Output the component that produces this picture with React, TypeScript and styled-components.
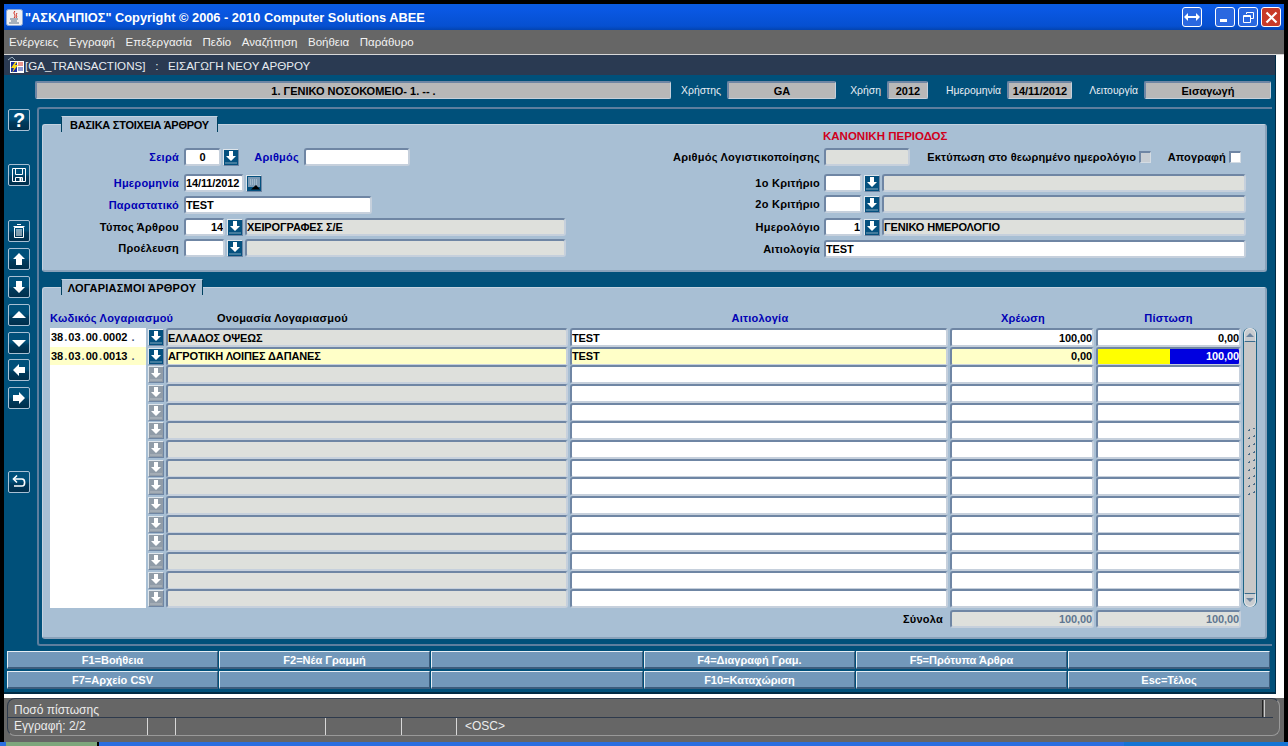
import React from 'react';
import styled, {createGlobalStyle} from 'styled-components';

const GlobalStyle = createGlobalStyle`
  html, body {
    margin: 0;
    padding: 0;
    background: #000;
    overflow: hidden;
  }
  * {
    box-sizing: border-box;
  }
`;

const font = `"Liberation Sans", Arial, sans-serif`;

const Screen = styled.div`
  width: 1288px;
  height: 746px;
  padding-top: 4px;
  background: #000;
  font-family: ${font};
  display: flex;
  flex-direction: column;
  overflow: hidden;
`;

const AppWindow = styled.div`
  margin-left: 4px;
  width: 1280px;
  height: 738px;
  display: flex;
  flex-direction: column;
`;

const TitleBar = styled.div`
  height: 26px;
  flex: none;
  background: linear-gradient(180deg, #0a5ce0 0%, #0a58e4 20%, #0650d0 85%, #0444b0 100%);
  display: flex;
  align-items: center;
  padding: 0 3px 0 2px;
`;

const TitleIcon = styled.svg`
  width: 17px;
  height: 17px;
  flex: none;
`;

const TitleText = styled.div`
  margin-left: 2px;
  color: #fff;
  font-size: 12.8px;
  font-weight: bold;
  white-space: nowrap;
  flex: 1;
`;

const WinButton = styled.div<{$close?: boolean; $mr?: number}>`
  width: 20px;
  height: 20px;
  border: 1px solid #fff;
  border-radius: 3px;
  margin-right: ${(p) => p.$mr ?? 3}px;
  background: ${(p) => (p.$close ? '#c83a28' : '#2a68e0')};
  display: flex;
  align-items: center;
  justify-content: center;
  &:last-child {
    margin-right: 0;
  }
`;

const MenuBar = styled.div`
  height: 25px;
  flex: none;
  background: #666;
  display: flex;
  align-items: center;
  padding-left: 5px;
  gap: 10.6px;
  color: #f2f2f2;
  font-size: 11.5px;
  border-bottom: 1px solid #d8d8d8;
`;

const Middle = styled.div`
  height: 643px;
  flex: none;
  display: flex;
  background: #fff;
  align-items: flex-start;
`;

const Inner = styled.div`
  width: 1272px;
  height: 639px;
  display: flex;
  flex-direction: column;
  background: #00507a;
  border-bottom: 2px solid #002a44;
  border-right: 1px solid #002a44;
`;

const NavBar = styled.div`
  height: 20px;
  flex: none;
  background: #2a3a52;
  color: #e8ecf0;
  font-size: 11.6px;
  display: flex;
  align-items: center;
  padding: 1px 0 0 3px;
  white-space: pre;
`;

const NavIcon = styled.svg`
  width: 18px;
  height: 17px;
  margin-right: 0;
  flex: none;
`;

const HeaderRow = styled.div`
  display: flex;
  align-items: center;
  margin: 6px 0 0 31px;
  height: 18px;
  flex: none;
`;

const HeaderField = styled.div<{$w: number}>`
  width: ${(p) => p.$w}px;
  height: 18px;
  flex: none;
  background: #b8b8b8;
  border-top: 2px solid #6f86a4;
  border-left: 2px solid #6f86a4;
  border-bottom: 1px solid #c6d0dc;
  border-right: 1px solid #c6d0dc;
  border-radius: 2px;
  color: #000;
  font-size: 11px;
  font-weight: bold;
  display: flex;
  align-items: center;
  justify-content: center;
  white-space: nowrap;
`;

const HeaderLabel = styled.div<{$w: number}>`
  width: ${(p) => p.$w}px;
  flex: none;
  color: #e8eef4;
  font-size: 10.4px;
  text-align: right;
  padding-right: 6px;
  white-space: nowrap;
`;

const Body = styled.div`
  display: flex;
  flex: none;
  margin-top: 8px;
`;

const ToolBar = styled.div`
  width: 33px;
  flex: none;
  padding-left: 4px;
  display: flex;
  flex-direction: column;
`;

const ToolButton = styled.div<{$mt: number}>`
  width: 22px;
  height: 22px;
  flex: none;
  margin-top: ${(p) => p.$mt}px;
  border: 1px solid #a8c0d4;
  border-radius: 2px;
  background: linear-gradient(180deg, #00507a 0%, #00507a 45%, #003a5c 60%, #002f4c 100%);
  color: #fff;
  display: flex;
  align-items: center;
  justify-content: center;
`;

const ToolGlyph = styled.svg`
  width: 16px;
  height: 16px;
`;

const QuestionMark = styled.span`
  font-size: 20px;
  font-weight: bold;
  line-height: 20px;
`;

const Frame = styled.div`
  width: 1235px;
  height: 539px;
  flex: none;
  border-top: 2px solid #5e7e9e;
  border-left: 2px solid #5e7e9e;
  border-bottom: 2px solid #5e7e9e;
  border-top-left-radius: 3px;
  border-bottom-left-radius: 3px;
  padding: 15px 0 0 3px;
  display: flex;
  flex-direction: column;
`;

const Panel = styled.div<{$h: number; $mt?: number}>`
  position: relative;
  width: 1225px;
  height: ${(p) => p.$h}px;
  flex: none;
  margin-top: ${(p) => p.$mt ?? 0}px;
  background: #a8bfd4;
  border-top: 1px solid #c4d2e0;
  border-left: 1px solid #c4d2e0;
  border-bottom: 2px solid #8aa2ba;
  border-right: 2px solid #8aa2ba;
  border-radius: 3px;
`;

const PanelTab = styled.div<{$w: number; $ls: number}>`
  position: absolute;
  left: 18px;
  top: -9px;
  width: ${(p) => p.$w}px;
  height: 16px;
  background: #a8bfd4;
  border-top: 1px solid #c4d2e0;
  border-left: 1px solid #00405f;
  border-right: 1px solid #00405f;
  color: #000;
  font-size: 11px;
  font-weight: bold;
  letter-spacing: ${(p) => p.$ls}px;
  display: flex;
  align-items: center;
  justify-content: center;
  white-space: nowrap;
`;

const FormColumns = styled.div`
  display: flex;
  height: 100%;
`;

const LeftColumn = styled.div`
  width: 597px;
  flex: none;
  padding-top: 23px;
`;

const RightColumn = styled.div`
  flex: 1;
  padding-top: 2px;
`;

const FormRow = styled.div<{$mt?: number}>`
  display: flex;
  align-items: center;
  height: 18px;
  margin-top: ${(p) => p.$mt ?? 0}px;
`;

const Label = styled.div<{$w: number; $blue?: boolean; $gap?: number}>`
  width: ${(p) => p.$w}px;
  flex: none;
  text-align: right;
  padding-right: ${(p) => p.$gap ?? 5}px;
  color: ${(p) => (p.$blue ? '#0000b4' : '#000')};
  font-size: 11px;
  font-weight: bold;
  letter-spacing: 0.25px;
  white-space: nowrap;
`;

const Field = styled.div<{$w?: number; $gray?: boolean; $right?: boolean; $center?: boolean}>`
  width: ${(p) => (p.$w ? `${p.$w}px` : 'auto')};
  flex: ${(p) => (p.$w ? 'none' : 1)};
  height: 18px;
  background: ${(p) => (p.$gray ? '#dee0dc' : '#fff')};
  border-top: 2px solid #6f86a4;
  border-left: 2px solid #6f86a4;
  border-bottom: 2px solid #c6d0dc;
  border-right: 2px solid #c6d0dc;
  border-radius: 3px;
  color: #000;
  font-size: 11px;
  font-weight: bold;
  letter-spacing: -0.12px;
  display: flex;
  align-items: center;
  justify-content: ${(p) => (p.$right ? 'flex-end' : p.$center ? 'center' : 'flex-start')};
  padding: 0;
  white-space: nowrap;
  overflow: hidden;
`;

const LovButton = styled.div<{$off?: boolean; $ml?: number; $mr?: number}>`
  width: 16px;
  height: 17px;
  flex: none;
  margin-left: ${(p) => p.$ml ?? 2}px;
  margin-right: ${(p) => p.$mr ?? 2}px;
  background: ${(p) => (p.$off ? '#909ca8' : '#04507e')};
  border-top: 1px solid #dfe6ec;
  border-left: 1px solid #dfe6ec;
  border-bottom: 1px solid #6f86a4;
  border-right: 1px solid #6f86a4;
  display: flex;
  align-items: center;
  justify-content: center;
`;

const LovGlyph = styled.svg`
  width: 12px;
  height: 13px;
`;

const PeriodTitle = styled.div`
  height: 18px;
  margin-bottom: 3px;
  padding-left: 183px;
  color: #d0001c;
  font-size: 11.5px;
  font-weight: bold;
  display: flex;
  align-items: center;
  white-space: nowrap;
`;

const CheckLabel = styled.div<{$w: number}>`
  width: ${(p) => p.$w}px;
  flex: none;
  text-align: right;
  padding-right: 3px;
  font-size: 11px;
  font-weight: bold;
  letter-spacing: 0.15px;
  color: #000;
  white-space: nowrap;
`;

const CheckBox = styled.div<{$gray?: boolean}>`
  width: 12px;
  height: 12px;
  flex: none;
  background: ${(p) => (p.$gray ? '#c8ced4' : '#fff')};
  border-top: 2px solid #6f86a4;
  border-left: 2px solid #6f86a4;
  border-bottom: 1px solid #d4dce4;
  border-right: 1px solid #d4dce4;
`;

const TableHead = styled.div`
  display: grid;
  grid-template-columns: 116px 404px 380px 146px 145px;
  height: 14px;
  margin: 23px 0 3px 7px;
  align-items: center;
`;

const HeadCell = styled.div<{$blue?: boolean; $pl?: number; $center?: boolean}>`
  color: ${(p) => (p.$blue ? '#0000b4' : '#000')};
  font-size: 11px;
  font-weight: bold;
  letter-spacing: 0.25px;
  padding-left: ${(p) => p.$pl ?? 0}px;
  text-align: ${(p) => (p.$center ? 'center' : 'left')};
  white-space: nowrap;
`;

const TableBody = styled.div`
  display: flex;
  margin-left: 7px;
  height: 280px;
`;

const Rows = styled.div`
  width: 1191px;
  flex: none;
  display: grid;
  grid-template-columns: 98px 18px 404px 380px 146px 145px;
  grid-template-rows: repeat(15, 18.667px);
`;

const CodeCell = styled.div<{$active?: boolean}>`
  background: ${(p) => (p.$active ? '#ffffc8' : '#fff')};
  margin-right: 2px;
  font-size: 11px;
  font-weight: bold;
  color: #000;
  display: flex;
  align-items: center;
  padding-left: 1px;
  white-space: pre;
`;

const CodeDot = styled.span<{$last?: boolean}>`
  color: #44587a;
  margin: 0 ${(p) => (p.$last ? 0 : 1)}px 0 ${(p) => (p.$last ? 4 : 1)}px;
`;

const RowLov = styled(LovButton)`
  margin: 1px 0 0 0;
`;

const RowField = styled(Field)<{$active?: boolean}>`
  height: 19px;
  margin-right: 2px;
  background: ${(p) => (p.$active ? '#ffffc8' : p.$gray ? '#dee0dc' : '#fff')};
`;

const CreditField = styled(Field)`
  height: 19px;
`;

const CreditActive = styled(Field)`
  height: 19px;
  padding: 0;
  background: #ffffc8;
  align-items: stretch;
`;

const CreditYellow = styled.div`
  width: 72px;
  flex: none;
  background: #ffff00;
`;

const CreditBlue = styled.div`
  flex: 1;
  background: #0000e0;
  color: #fff;
  display: flex;
  align-items: center;
  justify-content: flex-end;
`;

const ScrollBar = styled.div`
  position: relative;
  width: 14px;
  height: 279px;
  margin-left: 2px;
  flex: none;
  background: #c8c8c8;
  border-left: 1px solid #1d6486;
  border-right: 1px solid #1d6486;
  border-radius: 6px 6px 6px 6px;
  display: flex;
  flex-direction: column;
  justify-content: space-between;
`;

const ScrollEnd = styled.div<{$top?: boolean}>`
  height: 14px;
  background: #c8ccd0;
  border: 1px solid #e0e4e8;
  border-${(p) => (p.$top ? 'bottom' : 'top')}: 1px solid #3c6c8c;
  border-radius: ${(p) => (p.$top ? '6px 6px 0 0' : '0 0 6px 6px')};
  display: flex;
  align-items: center;
  justify-content: center;
`;

const ScrollArrow = styled.div<{$up?: boolean}>`
  width: 0;
  height: 0;
  border-left: 4px solid transparent;
  border-right: 4px solid transparent;
  border-${(p) => (p.$up ? 'bottom' : 'top')}: 4px solid #6a84a0;
`;

const ScrollGrip = styled.svg`
  position: absolute;
  left: 3px;
  top: 100px;
  width: 10px;
  height: 70px;
`;

const TotalsRow = styled.div`
  display: grid;
  grid-template-columns: 116px 404px 380px 146px 145px;
  margin: 2px 0 0 7px;
  height: 18px;
`;

const TotalLabel = styled.div`
  grid-column: 1 / 4;
  text-align: right;
  padding-right: 7px;
  font-size: 11px;
  font-weight: bold;
  letter-spacing: 0.25px;
  color: #000;
  line-height: 18px;
`;

const TotalField = styled(Field)`
  margin-right: 2px;
  color: #5f7690;
`;

const TotalLast = styled(Field)`
  color: #5f7690;
`;

const FunctionKeys = styled.div`
  display: grid;
  grid-template-columns: 212px 212px 213px 212px 212px 203px;
  grid-auto-rows: 18px;
  row-gap: 2px;
  margin: 5px 0 0 3px;
`;

const FunctionKey = styled.div`
  margin-right: 1px;
  background: #7298ba;
  border-top: 1px solid #e6eef4;
  border-left: 1px solid #e6eef4;
  border-bottom: 2px solid #3c5c7c;
  border-right: 1px solid #3c5c7c;
  color: #fff;
  font-size: 11px;
  font-weight: bold;
  display: flex;
  align-items: center;
  justify-content: center;
  white-space: nowrap;
`;

const StatusBar = styled.div`
  height: 44px;
  flex: none;
  background: #666;
  padding: 0 4px 6px 3px;
  display: flex;
`;

const StatusInner = styled.div`
  flex: 1;
  border: 1px solid #2e3a4c;
  border-bottom-color: #999;
  border-right-color: #999;
  border-radius: 8px;
  color: #ececec;
  font-size: 12px;
  display: flex;
  flex-direction: column;
`;

const StatusTop = styled.div`
  height: 19px;
  padding-left: 6px;
  border-bottom: 1px solid #2e3a4c;
  margin-right: 6px;
  display: flex;
  align-items: flex-end;
  justify-content: space-between;
`;

const StatusEnd = styled.div`
  width: 3px;
  height: 17px;
  margin-right: 8px;
  border-left: 1px solid #222;
  border-right: 1px solid #ccc;
`;

const StatusBottom = styled.div`
  display: flex;
  flex: 1;
  align-items: center;
`;

const StatusCell = styled.div<{$w: number; $pl?: number}>`
  width: ${(p) => p.$w}px;
  height: 17px;
  flex: none;
  padding-left: ${(p) => p.$pl ?? 6}px;
  border-right: 1px solid #d8d8d8;
  white-space: nowrap;
  line-height: 17px;
  &:last-child {
    border-right: none;
  }
`;

const Taskbar = styled.div`
  height: 4px;
  flex: none;
  display: flex;
  background: #2a6ee0;
`;

const StartButton = styled.div`
  width: 91px;
  margin-left: 6px;
  background: #7da67c;
`;

const TaskGap = styled.div`
  width: 2px;
  background: #000;
`;

const TaskMiddle = styled.div`
  width: 1025px;
`;

const TaskTray = styled.div`
  flex: 1;
  background: #1474d4;
`;

const arrowPaths: Record<string, string> = {
  up: 'M8 2 L14 8 L11 8 L11 14 L5 14 L5 8 L2 8 Z',
  down: 'M5 2 L11 2 L11 8 L14 8 L8 14 L2 8 L5 8 Z',
  left: 'M2 8 L8 2 L8 5 L14 5 L14 11 L8 11 L8 14 Z',
  right: 'M2 5 L8 5 L8 2 L14 8 L8 14 L8 11 L2 11 Z',
  triUp: 'M8 4 L15 11 L1 11 Z',
  triDown: 'M1 5 L15 5 L8 12 Z',
};

const ArrowIcon = ({dir}: {dir: string}) => (
  <ToolGlyph viewBox="0 0 16 16">
    <path d={arrowPaths[dir]} fill="#fff"/>
  </ToolGlyph>
);

const SaveIcon = () => (
  <ToolGlyph viewBox="0 0 16 16" fill="none" stroke="#fff">
    <path d="M1.5 1.5 H14.5 V14.5 H1.5 Z"/>
    <path d="M4.5 1.5 V7.5 H11.5 V1.5"/>
    <path d="M4.5 14.5 V10.5 H11.5 V14.5"/>
    <path d="M8.5 11 H10.5 V14 H8.5 Z" fill="#fff" stroke="none"/>
  </ToolGlyph>
);

const TrashIcon = () => (
  <ToolGlyph viewBox="0 0 16 16" fill="none" stroke="#fff">
    <path d="M6 1.5 H10 M2.5 3.5 H13.5"/>
    <path d="M3.5 4.5 H12.5 V14.5 H3.5 Z"/>
    <path d="M6 6 V13 M8 6 V13 M10 6 V13"/>
  </ToolGlyph>
);

const UndoIcon = () => (
  <ToolGlyph viewBox="0 0 16 16" fill="none" stroke="#fff" strokeWidth="1.6">
    <path d="M3 5 H11 C14.5 5 14.5 12 11 12 H3"/>
    <path d="M6 1.5 L2.5 5 L6 8.5"/>
  </ToolGlyph>
);

const LovIcon = ({off}: {off?: boolean}) => (
  <LovGlyph viewBox="0 0 12 13">
    <path d="M4 0 H8 V5 H11 L6 10 L1 5 H4 Z" fill="#fff"/>
    <path d="M0.5 12 H11.5" stroke={off ? '#e0e0e0' : '#fff'} strokeDasharray="1 1"/>
  </LovGlyph>
);

const CalendarIcon = () => (
  <LovGlyph viewBox="0 0 12 13">
    <rect x="0" y="0" width="12" height="10" fill="#7c9ab4"/>
    <path d="M2 3 H10 M2 5 H10 M2 7 H10" stroke="#c4d4e0" strokeDasharray="1 1"/>
    <path d="M3 12.5 L8 8 L12 12.5 Z" fill="#000"/>
  </LovGlyph>
);

const JavaIcon = () => (
  <TitleIcon viewBox="0 0 17 17">
    <rect x="0.5" y="0.5" width="16" height="16" rx="2" fill="#f0f0f0" stroke="#8aa8d8"/>
    <path d="M9 2 C6 5 11 6 8 9 M11 4 C9 6 12 7 10 9" stroke="#d02818" fill="none"/>
    <path d="M4 10 H12 M5 12 H11 M3 14 H13" stroke="#5a7088"/>
  </TitleIcon>
);

const FormsIcon = () => (
  <NavIcon viewBox="0 0 18 17">
    <path d="M1 3 L5 0 L8 3" stroke="#9cb0c0" fill="none"/>
    <rect x="3" y="4" width="14" height="12" fill="#fff"/>
    <rect x="4" y="5" width="6" height="10" fill="#1a2ea0"/>
    <path d="M8 5 L4 11 H7 L5 16 L11 8 H8 L10 5 Z" fill="#f8d818"/>
    <path d="M11 6 H16 M11 8 H16" stroke="#d02818"/>
    <path d="M11 11 H16 M11 13 H16" stroke="#1a2ea0"/>
  </NavIcon>
);

const GripIcon = () => (
  <ScrollGrip viewBox="0 0 10 70">
    {Array.from({length: 9}).map((_, i) => (
      <g key={i} fill="#4a6c88">
        <rect x="1" y={i * 8 + 2} width="2" height="1"/>
        <rect x="2" y={i * 8 + 1} width="1" height="1"/>
        <rect x="6" y={i * 8} width="2" height="1"/>
        <rect x="7" y={i * 8 - 1} width="1" height="1"/>
      </g>
    ))}
  </ScrollGrip>
);

const rows = [
  {code: ['38', '03', '00', '0002'], name: 'ΕΛΛΑΔΟΣ ΟΨΕΩΣ', note: 'TEST', debit: '100,00', credit: '0,00'},
  {code: ['38', '03', '00', '0013'], name: 'ΑΓΡΟΤΙΚΗ ΛΟΙΠΕΣ ΔΑΠΑΝΕΣ', note: 'TEST', debit: '0,00', credit: '100,00', active: true},
  ...Array.from({length: 13}).map(() => ({code: null, name: '', note: '', debit: '', credit: '', active: false})),
];

const keys = [
  'F1=Βοήθεια', 'F2=Νέα Γραμμή', '', 'F4=Διαγραφή Γραμ.', 'F5=Πρότυπα Άρθρα', '',
  'F7=Αρχείο CSV', '', '', 'F10=Καταχώριση', '', 'Esc=Τέλος',
];

const App = () => {
  return (
    <Screen>
      <GlobalStyle/>
      <AppWindow>
        <TitleBar>
          <JavaIcon/>
          <TitleText>"ΑΣΚΛΗΠΙΟΣ" Copyright © 2006 - 2010 Computer Solutions ABEE</TitleText>
          <WinButton $mr={13}>
            <svg width="16" height="10" viewBox="0 0 16 10"><path d="M0 5 L4 1 V4 H12 V1 L16 5 L12 9 V6 H4 V9 Z" fill="#fff"/></svg>
          </WinButton>
          <WinButton>
            <svg width="12" height="12" viewBox="0 0 12 12"><rect x="1" y="8" width="7" height="3" fill="#fff"/></svg>
          </WinButton>
          <WinButton>
            <svg width="13" height="13" viewBox="0 0 13 13" fill="none" stroke="#fff"><path d="M4.5 3 V1.5 H11.5 V7.5 H9"/><path d="M1.5 4.5 H8.5 V11.5 H1.5 Z M1.5 5.5 H8.5"/></svg>
          </WinButton>
          <WinButton $close>
            <svg width="13" height="13" viewBox="0 0 13 13"><path d="M1.5 1.5 L11.5 11.5 M11.5 1.5 L1.5 11.5" stroke="#fff" strokeWidth="2.2"/></svg>
          </WinButton>
        </TitleBar>
        <MenuBar>
          <span>Ενέργειες</span>
          <span>Εγγραφή</span>
          <span>Επεξεργασία</span>
          <span>Πεδίο</span>
          <span>Αναζήτηση</span>
          <span>Βοήθεια</span>
          <span>Παράθυρο</span>
        </MenuBar>
        <Middle>
          <Inner>
            <NavBar>
              <FormsIcon/>
              {'[GA_TRANSACTIONS]   :   ΕΙΣΑΓΩΓΗ ΝΕΟΥ ΑΡΘΡΟΥ'}
            </NavBar>
            <HeaderRow>
              <HeaderField $w={636}>1. ΓΕΝΙΚΟ ΝΟΣΟΚΟΜΕΙΟ- 1. -- .</HeaderField>
              <HeaderLabel $w={56}>Χρήστης</HeaderLabel>
              <HeaderField $w={109}>GA</HeaderField>
              <HeaderLabel $w={51}>Χρήση</HeaderLabel>
              <HeaderField $w={41}>2012</HeaderField>
              <HeaderLabel $w={79}>Ημερομηνία</HeaderLabel>
              <HeaderField $w={65}>14/11/2012</HeaderField>
              <HeaderLabel $w={72}>Λειτουργία</HeaderLabel>
              <HeaderField $w={127}>Εισαγωγή</HeaderField>
            </HeaderRow>
            <Body>
              <ToolBar>
                <ToolButton $mt={2}><QuestionMark>?</QuestionMark></ToolButton>
                <ToolButton $mt={33}><SaveIcon/></ToolButton>
                <ToolButton $mt={34}><TrashIcon/></ToolButton>
                <ToolButton $mt={6}><ArrowIcon dir="up"/></ToolButton>
                <ToolButton $mt={6}><ArrowIcon dir="down"/></ToolButton>
                <ToolButton $mt={6}><ArrowIcon dir="triUp"/></ToolButton>
                <ToolButton $mt={6}><ArrowIcon dir="triDown"/></ToolButton>
                <ToolButton $mt={5}><ArrowIcon dir="left"/></ToolButton>
                <ToolButton $mt={6}><ArrowIcon dir="right"/></ToolButton>
                <ToolButton $mt={62}><UndoIcon/></ToolButton>
              </ToolBar>
              <Frame>
                <Panel $h={148}>
                  <PanelTab $w={157} $ls={-0.25}>ΒΑΣΙΚΑ ΣΤΟΙΧΕΙΑ ΆΡΘΡΟΥ</PanelTab>
                  <FormColumns>
                    <LeftColumn>
                      <FormRow>
                        <Label $w={141} $blue>Σειρά</Label>
                        <Field $w={37} $center>0</Field>
                        <LovButton><LovIcon/></LovButton>
                        <Label $w={63} $blue>Αριθμός</Label>
                        <Field $w={106}/>
                      </FormRow>
                      <FormRow $mt={8}>
                        <Label $w={141} $blue>Ημερομηνία</Label>
                        <Field $w={60}>14/11/2012</Field>
                        <LovButton $ml={2}><CalendarIcon/></LovButton>
                      </FormRow>
                      <FormRow $mt={4}>
                        <Label $w={141} $blue>Παραστατικό</Label>
                        <Field $w={188}>TEST</Field>
                      </FormRow>
                      <FormRow $mt={4}>
                        <Label $w={141}>Τύπος Άρθρου</Label>
                        <Field $w={41} $right>14</Field>
                        <LovButton><LovIcon/></LovButton>
                        <Field $w={321} $gray>ΧΕΙΡΟΓΡΑΦΕΣ Σ/Ε</Field>
                      </FormRow>
                      <FormRow $mt={3}>
                        <Label $w={141}>Προέλευση</Label>
                        <Field $w={41}/>
                        <LovButton><LovIcon/></LovButton>
                        <Field $w={321} $gray/>
                      </FormRow>
                    </LeftColumn>
                    <RightColumn>
                      <PeriodTitle>ΚΑΝΟΝΙΚΗ ΠΕΡΙΟΔΟΣ</PeriodTitle>
                      <FormRow>
                        <Label $w={184} $gap={4}>Αριθμός Λογιστικοποίησης</Label>
                        <Field $w={86} $gray/>
                        <CheckLabel $w={229}>Εκτύπωση στο θεωρημένο ημερολόγιο</CheckLabel>
                        <CheckBox $gray/>
                        <CheckLabel $w={78}>Απογραφή</CheckLabel>
                        <CheckBox/>
                      </FormRow>
                      <FormRow $mt={8}>
                        <Label $w={184} $gap={4}>1ο Κριτήριο</Label>
                        <Field $w={38}/>
                        <LovButton><LovIcon/></LovButton>
                        <Field $w={364} $gray/>
                      </FormRow>
                      <FormRow $mt={3}>
                        <Label $w={184} $gap={4}>2ο Κριτήριο</Label>
                        <Field $w={38}/>
                        <LovButton><LovIcon/></LovButton>
                        <Field $w={364} $gray/>
                      </FormRow>
                      <FormRow $mt={5}>
                        <Label $w={184} $gap={4}>Ημερολόγιο</Label>
                        <Field $w={38} $right>1</Field>
                        <LovButton><LovIcon/></LovButton>
                        <Field $w={364} $gray>ΓΕΝΙΚΟ ΗΜΕΡΟΛΟΓΙΟ</Field>
                      </FormRow>
                      <FormRow $mt={4}>
                        <Label $w={184} $gap={4}>Αιτιολογία</Label>
                        <Field $w={422}>TEST</Field>
                      </FormRow>
                    </RightColumn>
                  </FormColumns>
                </Panel>
                <Panel $h={352} $mt={15}>
                  <PanelTab $w={142} $ls={0.25}>ΛΟΓΑΡΙΑΣΜΟΙ ΆΡΘΡΟΥ</PanelTab>
                  <TableHead>
                    <HeadCell $blue>Κωδικός Λογαριασμού</HeadCell>
                    <HeadCell $pl={51}>Ονομασία Λογαριασμού</HeadCell>
                    <HeadCell $blue $center>Αιτιολογία</HeadCell>
                    <HeadCell $blue $center>Χρέωση</HeadCell>
                    <HeadCell $blue $center>Πίστωση</HeadCell>
                  </TableHead>
                  <TableBody>
                    <Rows>
                      {rows.map((row, i) => (
                        <React.Fragment key={i}>
                          <CodeCell $active={row.active}>
                            {row.code && row.code.map((part, j) => (
                              <React.Fragment key={part}>
                                {part}<CodeDot $last={j === 3}>.</CodeDot>
                              </React.Fragment>
                            ))}
                          </CodeCell>
                          <RowLov $off={!row.code}><LovIcon off={!row.code}/></RowLov>
                          <RowField $gray $active={row.active}>{row.name}</RowField>
                          <RowField $active={row.active}>{row.note}</RowField>
                          <RowField $right $active={row.active}>{row.debit}</RowField>
                          {row.active ? (
                            <CreditActive>
                              <CreditYellow/>
                              <CreditBlue>{row.credit}</CreditBlue>
                            </CreditActive>
                          ) : (
                            <CreditField $right>{row.credit}</CreditField>
                          )}
                        </React.Fragment>
                      ))}
                    </Rows>
                    <ScrollBar>
                      <ScrollEnd $top><ScrollArrow $up/></ScrollEnd>
                      <GripIcon/>
                      <ScrollEnd><ScrollArrow/></ScrollEnd>
                    </ScrollBar>
                  </TableBody>
                  <TotalsRow>
                    <TotalLabel>Σύνολα</TotalLabel>
                    <TotalField $gray $right>100,00</TotalField>
                    <TotalLast $gray $right>100,00</TotalLast>
                  </TotalsRow>
                </Panel>
              </Frame>
            </Body>
            <FunctionKeys>
              {keys.map((key, i) => (
                <FunctionKey key={i}>{key}</FunctionKey>
              ))}
            </FunctionKeys>
          </Inner>
        </Middle>
        <StatusBar>
          <StatusInner>
            <StatusTop>
              <span>Ποσό πίστωσης</span>
              <StatusEnd/>
            </StatusTop>
            <StatusBottom>
              <StatusCell $w={140}>Εγγραφή: 2/2</StatusCell>
              <StatusCell $w={28}/>
              <StatusCell $w={150}/>
              <StatusCell $w={76}/>
              <StatusCell $w={55}/>
              <StatusCell $w={200} $pl={8}>{'<OSC>'}</StatusCell>
            </StatusBottom>
          </StatusInner>
        </StatusBar>
      </AppWindow>
      <Taskbar>
        <StartButton/>
        <TaskGap/>
        <TaskMiddle/>
        <TaskTray/>
      </Taskbar>
    </Screen>
  );
};

export default App;
